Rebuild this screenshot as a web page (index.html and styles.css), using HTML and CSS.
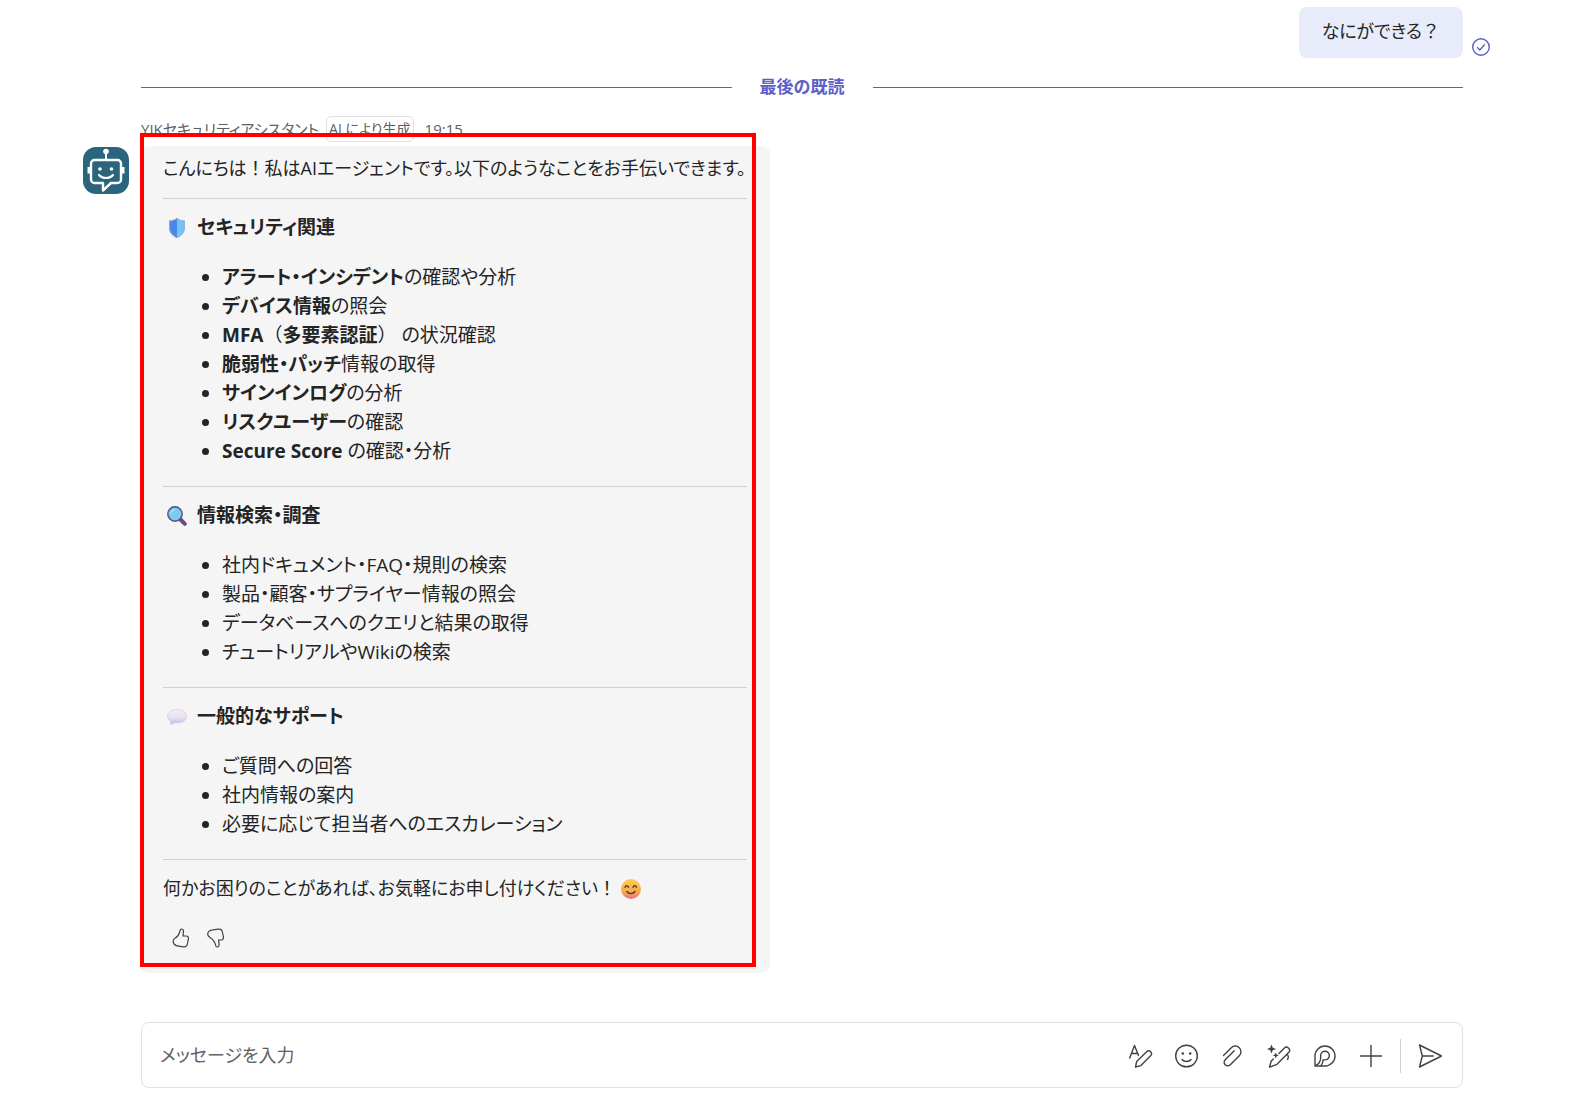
FILE: index.html
```html
<!DOCTYPE html>
<html lang="ja">
<head>
<meta charset="utf-8">
<meta name="viewport" content="width=device-width, initial-scale=1">
<title>YIKセキュリティアシスタント</title>
<link rel="stylesheet" href="styles.css">
</head>
<body>

<main class="chat">

  <div class="sent">
    <p class="sent-bubble">なにができる<span class="full">？</span></p>
    <svg class="sent-status" viewBox="0 0 20 20" role="img" aria-label="送信済み">
      <circle cx="10" cy="10" r="8.300"/>
      <path d="M6.200 10.200l2.600 2.700 5-5.400"/>
    </svg>
  </div>

  <div class="last-read"><span>最後の既読</span></div>

  <article class="message">
    <svg class="avatar" viewBox="0 0 46 47" role="img" aria-label="YIKセキュリティアシスタント">
      <rect width="46" height="47" rx="13" fill="#2b657d"/>
      <circle cx="23" cy="4.500" r="2.800" fill="#fff"/>
      <path d="M23 5v8" stroke="#fff" stroke-width="2" fill="none"/>
      <path d="M11.500 13h23a3.500 3.500 0 0 1 3.500 3.500v16a3.500 3.500 0 0 1-3.500 3.500h-6.500L20 43.500V36h-8.500A3.500 3.500 0 0 1 8 32.500v-16A3.500 3.500 0 0 1 11.500 13z" stroke="#fff" stroke-width="2.400" fill="none" stroke-linejoin="round"/>
      <path d="M7.500 21H5.500v4.500h2M38.500 21h2v4.500h-2" stroke="#fff" stroke-width="2" fill="#fff"/>
      <circle cx="17" cy="22" r="1.800" fill="#fff"/>
      <circle cx="28.500" cy="22" r="1.800" fill="#fff"/>
      <path d="M16 28c3.500 4 10.500 4 14 0" stroke="#fff" stroke-width="2.200" fill="none" stroke-linecap="round"/>
    </svg>

    <div class="message-body">
      <header class="message-head">
        <span>YIKセキュリティアシスタント</span>
        <span class="ai-tag">AI により生成</span>
        <time datetime="19:15">19:15</time>
      </header>

      <div class="card">
        <p>こんにちは<span class="full">！</span>私はAIエージェントです。以下のようなことをお手伝いできます。</p>
        <hr>

        <h3>
          <svg class="emoji" viewBox="0 0 20 20" aria-hidden="true">
            <path d="M10 0C7.500 2 5 2.500 2.200 2.600V10c0 5 3.500 8 7.800 10z" fill="#4b87e6"/>
            <path d="M10 0c2.500 2 5 2.500 7.800 2.600V10c0 5-3.500 8-7.800 10z" fill="#6fc4fb"/>
            <path d="M10 .5c2.500 1.800 4.800 2.400 7.400 2.500V10c0 4.700-3.300 7.600-7.400 9.500C5.900 17.600 2.600 14.700 2.600 10V3C5.200 2.900 7.500 2.300 10 .5z" fill="none" stroke="#a9a3bd" stroke-width=".9"/>
          </svg>
          セキュリティ関連
        </h3>
        <ul>
          <li><strong>アラート・インシデント</strong>の確認や分析</li>
          <li><strong>デバイス情報</strong>の照会</li>
          <li><strong>MFA</strong><span class="full">（</span><strong>多要素認証</strong><span class="full">）</span> の状況確認</li>
          <li><strong>脆弱性・パッチ</strong>情報の取得</li>
          <li><strong>サインインログ</strong>の分析</li>
          <li><strong>リスクユーザー</strong>の確認</li>
          <li><strong>Secure Score</strong> の確認・分析</li>
        </ul>
        <hr>

        <h3>
          <svg class="emoji" viewBox="0 0 20 20" aria-hidden="true">
            <path d="M13.500 13.500l4.300 4.300" stroke="#75457f" stroke-width="4" stroke-linecap="round"/>
            <circle cx="8" cy="8" r="7.200" fill="#7acbec" stroke="#58498d" stroke-width="1.400"/>
            <path d="M4 7c.5-2 1.800-3 3.600-3.200" fill="none" stroke="#a8e2f7" stroke-width="1.300" stroke-linecap="round"/>
          </svg>
          情報検索・調査
        </h3>
        <ul>
          <li>社内ドキュメント・FAQ・規則の検索</li>
          <li>製品・顧客・サプライヤー情報の照会</li>
          <li>データベースへのクエリと結果の取得</li>
          <li>チュートリアルやWikiの検索</li>
        </ul>
        <hr>

        <h3>
          <svg class="emoji" viewBox="0 0 20 20" aria-hidden="true">
            <defs>
              <linearGradient id="bubble" x1="0" y1="0" x2="0" y2="1">
                <stop offset="0" stop-color="#f3edf5"/>
                <stop offset=".5" stop-color="#eae3f0"/>
                <stop offset="1" stop-color="#c5b8de"/>
              </linearGradient>
            </defs>
            <path d="M10 2.500c5.500 0 9.500 2.700 9.500 6.800S15.500 16 10 16c-1 0-2-.1-2.800-.3-1.200 1-2.200 1.600-3.700 1.800.5-1 .6-2 .4-3.100C1.800 13.200.5 11.500.5 9.300c0-4.100 4-6.800 9.500-6.800z" fill="url(#bubble)" stroke="#cdc2dc" stroke-width=".6"/>
          </svg>
          一般的なサポート
        </h3>
        <ul>
          <li>ご質問への回答</li>
          <li>社内情報の案内</li>
          <li>必要に応じて担当者へのエスカレーション</li>
        </ul>
        <hr>

        <p>何かお困りのことがあれば、お気軽にお申し付けください<span class="full">！</span>
          <svg class="emoji-inline" viewBox="0 0 20 20" role="img" aria-label="笑顔">
            <defs>
              <linearGradient id="face" x1="0" y1="0" x2="0" y2="1">
                <stop offset="0" stop-color="#fbcf55"/>
                <stop offset=".65" stop-color="#f5a94a"/>
                <stop offset="1" stop-color="#e8708c"/>
              </linearGradient>
            </defs>
            <circle cx="10" cy="10" r="10" fill="url(#face)"/>
            <path d="M4 8.300c.8-2 2.700-2 3.500 0M12 8.300c.8-2 2.700-2 3.500 0M5.800 12.500c2 2.800 6.200 2.800 8.200 0" fill="none" stroke="#5a3440" stroke-width="1.400" stroke-linecap="round"/>
          </svg>
        </p>

        <div class="feedback">
          <button type="button" aria-label="いいね">
            <svg viewBox="0 0 20 20"><path d="M10.600 1c1.600 0 2 1.500 1.800 3l-.4 4h3.200c1.600 0 2.500 1.200 2.200 2.800l-1 5.200c-.4 2-1.900 3.200-3.900 2.900l-5.200-.8C4.600 17.700 2.800 16.500 2.300 14.500 1.900 12.300 2.400 11 4 10.200c3-1.500 4.500-4.500 5.300-8.200.1-.6.600-1 1.300-1z"/></svg>
          </button>
          <button type="button" aria-label="よくないね">
            <svg viewBox="0 0 20 20"><path d="M11.200 19c1.600 0 2-1.500 1.800-3l-.4-4h2.600c1.600 0 2.500-1.200 2.200-2.800l-1-5.200c-.4-2-1.900-3.200-3.900-2.900l-5.700.8C4 2.200 2 3.500 1.700 5.800c-.2 1.700.9 2.700 2.300 3.600 3.100 2 5.100 4.900 5.900 8.600.1.600.6 1 1.300 1z"/></svg>
          </button>
        </div>

        <div class="highlight-frame"></div>
      </div>
    </div>
  </article>

  <form class="composer">
    <input type="text" aria-label="メッセージを入力" placeholder="メッセージを入力">
    <div class="tools">
      <button type="button" aria-label="書式">
        <svg viewBox="0 0 24 24"><path d="M.7 14L5.500 1.500l4 10M2.500 9.500h6.500"/><path d="M6.500 23l1.200-5.500L17.600 7.800a2.800 2.800 0 0 1 4 4L11.900 21.600z"/></svg>
      </button>
      <button type="button" aria-label="絵文字">
        <svg viewBox="0 0 24 24"><circle cx="11.500" cy="12" r="10.800"/><path d="M7 15.500c2.200 2.700 6.800 2.700 9 0"/><circle class="dot" cx="7.800" cy="9.500" r="1.300"/><circle class="dot" cx="15.200" cy="9.500" r="1.300"/></svg>
      </button>
      <button type="button" aria-label="ファイルを添付">
        <svg viewBox="0 0 24 24"><path d="M2.500 11.500l7.800-7.800a5.600 5.600 0 0 1 8 8L9.300 20.800a3.600 3.600 0 0 1-5.100-5.100l9-9"/></svg>
      </button>
      <button type="button" aria-label="Copilot で書き換え">
        <svg viewBox="0 0 24 24"><path class="dot" d="M4.500.5l1.300 3.200L9.200 5 5.800 6.300 4.500 9.500 3.200 6.300 0 5l3.200-1.300zM8.800 8.500l.9 2 2.100.9-2.100.9-.9 2.100-.9-2.100-2.100-.9 2.100-.9z"/><path d="M12 9.500l5.200-5.300a3.100 3.100 0 0 1 4.400 4.400L10 20.300l-7.500 2.900 1.600-6 2.100-2.200M18.500 11.800l1.500-1.300c1.500 1 1.700 2.800.5 5"/></svg>
      </button>
      <button type="button" aria-label="Loop コンポーネント">
        <svg viewBox="0 0 24 24"><path d="M2 22V12A10 10 0 1 1 12 22z"/><path d="M2.500 21.500C6 20 7.700 17 7.700 13.500v-1.900a4.300 4.300 0 1 1 4.300 4.300h-2M8 21.700c1.500-1.700 2-3.500 2-5.800"/></svg>
      </button>
      <button type="button" aria-label="その他">
        <svg viewBox="0 0 24 24"><path d="M12 1.500v21M1.500 12h21"/></svg>
      </button>
      <span class="separator"></span>
      <button type="submit" aria-label="送信">
        <svg viewBox="0 0 24 24"><path d="M1.500 1l22 11-22 11 2.800-11zM4.300 12h11"/></svg>
      </button>
    </div>
  </form>

</main>

</body>
</html>
```
FILE: styles.css
```css
* { box-sizing: border-box; }

body {
  margin: 0;
  background: #fff;
  color: #242424;
  font-family: "Open Sans", "Noto Sans CJK JP", sans-serif;
  font-size: 18px;
  line-height: 29px;
  font-feature-settings: "palt";
}

p, h3, ul { margin: 0; padding: 0; }

button {
  display: flex;
  padding: 0;
  border: 0;
  background: none;
  cursor: pointer;
}

svg { display: block; flex: none; }

/* punctuation that keeps its full width */
.full { font-feature-settings: normal; }

.chat {
  display: flex;
  flex-direction: column;
  min-height: 100vh;
  padding: 7px 121px 31px 141px;
}

/* own message */
.sent {
  display: flex;
  justify-content: flex-end;
  align-items: flex-end;
  gap: 8px;
  margin-right: -28px;
}
.sent-bubble {
  padding: 10px 23px 12px;
  border-radius: 8px;
  background: #e8ebfa;
}
.sent-status {
  width: 20px;
  height: 20px;
  margin-bottom: 1px;
  fill: none;
  stroke: #5b5fc7;
  stroke-width: 1.4;
}

.last-read {
  display: flex;
  align-items: center;
  gap: 28px;
  margin-top: 17px;
  color: #5b5fc7;
  font-size: 17px;
  font-weight: bold;
  line-height: 24px;
  font-feature-settings: normal;
}
.last-read::before,
.last-read::after {
  content: "";
  flex: 1;
  height: 1px;
  background: #5b5fc7;
}

/* bot message */
.message {
  display: flex;
  align-items: flex-start;
  gap: 12px;
  margin: 16px 0 40px -58px;
}
.avatar {
  width: 46px;
  height: 47px;
  margin-top: 32px;
}
.message-body {
  flex: 1;
  max-width: 629px;
}
.message-head {
  display: flex;
  align-items: center;
  gap: 7px;
  height: 31px;
  padding-bottom: 3px;
  color: #616161;
  font-size: 15px;
  line-height: 24px;
}
.ai-tag {
  padding: 0 2px;
  border: 1px solid #e0e0e0;
  border-radius: 5px;
  font-size: 14px;
}
.message-head time { margin-left: 4px; }

.card {
  position: relative;
  padding: 8px 23px 25px 22px;
  border-radius: 8px;
  background: #f5f5f5;
}
.card p { white-space: nowrap; }
.card hr {
  height: 1px;
  margin: 15px 0 14px;
  border: 0;
  background: #d1d1d1;
}
.card h3 {
  display: flex;
  align-items: center;
  gap: 10px;
  padding-left: 4px;
  font-size: 19px;
}
.card ul {
  margin: 21px 0 20px;
  padding-left: 59px;
  font-size: 19px;
}

.emoji {
  width: 20px;
  height: 20px;
}
.emoji-inline {
  display: inline-block;
  width: 20px;
  height: 20px;
  vertical-align: -4px;
}

.feedback {
  display: flex;
  gap: 15px;
  margin-top: 25px;
  padding-left: 8px;
}
.feedback svg {
  width: 20px;
  height: 20px;
  fill: none;
  stroke: #424242;
  stroke-width: 1.2;
}

/* red frame drawn over the answer */
.highlight-frame {
  position: absolute;
  inset: -13px 14px 6px -1px;
  border: 4px solid #f00;
  pointer-events: none;
}

/* compose box */
.composer {
  display: flex;
  align-items: center;
  height: 66px;
  margin-top: auto;
  padding: 0 20px 0 18px;
  border: 1px solid #e0e0e0;
  border-radius: 8px;
}
.composer input {
  flex: 1;
  min-width: 0;
  padding: 0;
  border: 0;
  outline: 0;
  background: none;
  font: inherit;
  font-feature-settings: inherit;
}
.composer input::placeholder { color: #616161; opacity: 1; }
.tools {
  display: flex;
  align-items: center;
  gap: 22px;
  padding-top: 2px;
}
.tools svg {
  width: 24px;
  height: 24px;
  fill: none;
  stroke: #424242;
  stroke-width: 1.4;
  stroke-linejoin: round;
  stroke-linecap: round;
}
.tools .dot { fill: #424242; stroke: none; }
.separator {
  width: 1px;
  height: 34px;
  margin: 0 -5px;
  background: #d1d1d1;
}
```
